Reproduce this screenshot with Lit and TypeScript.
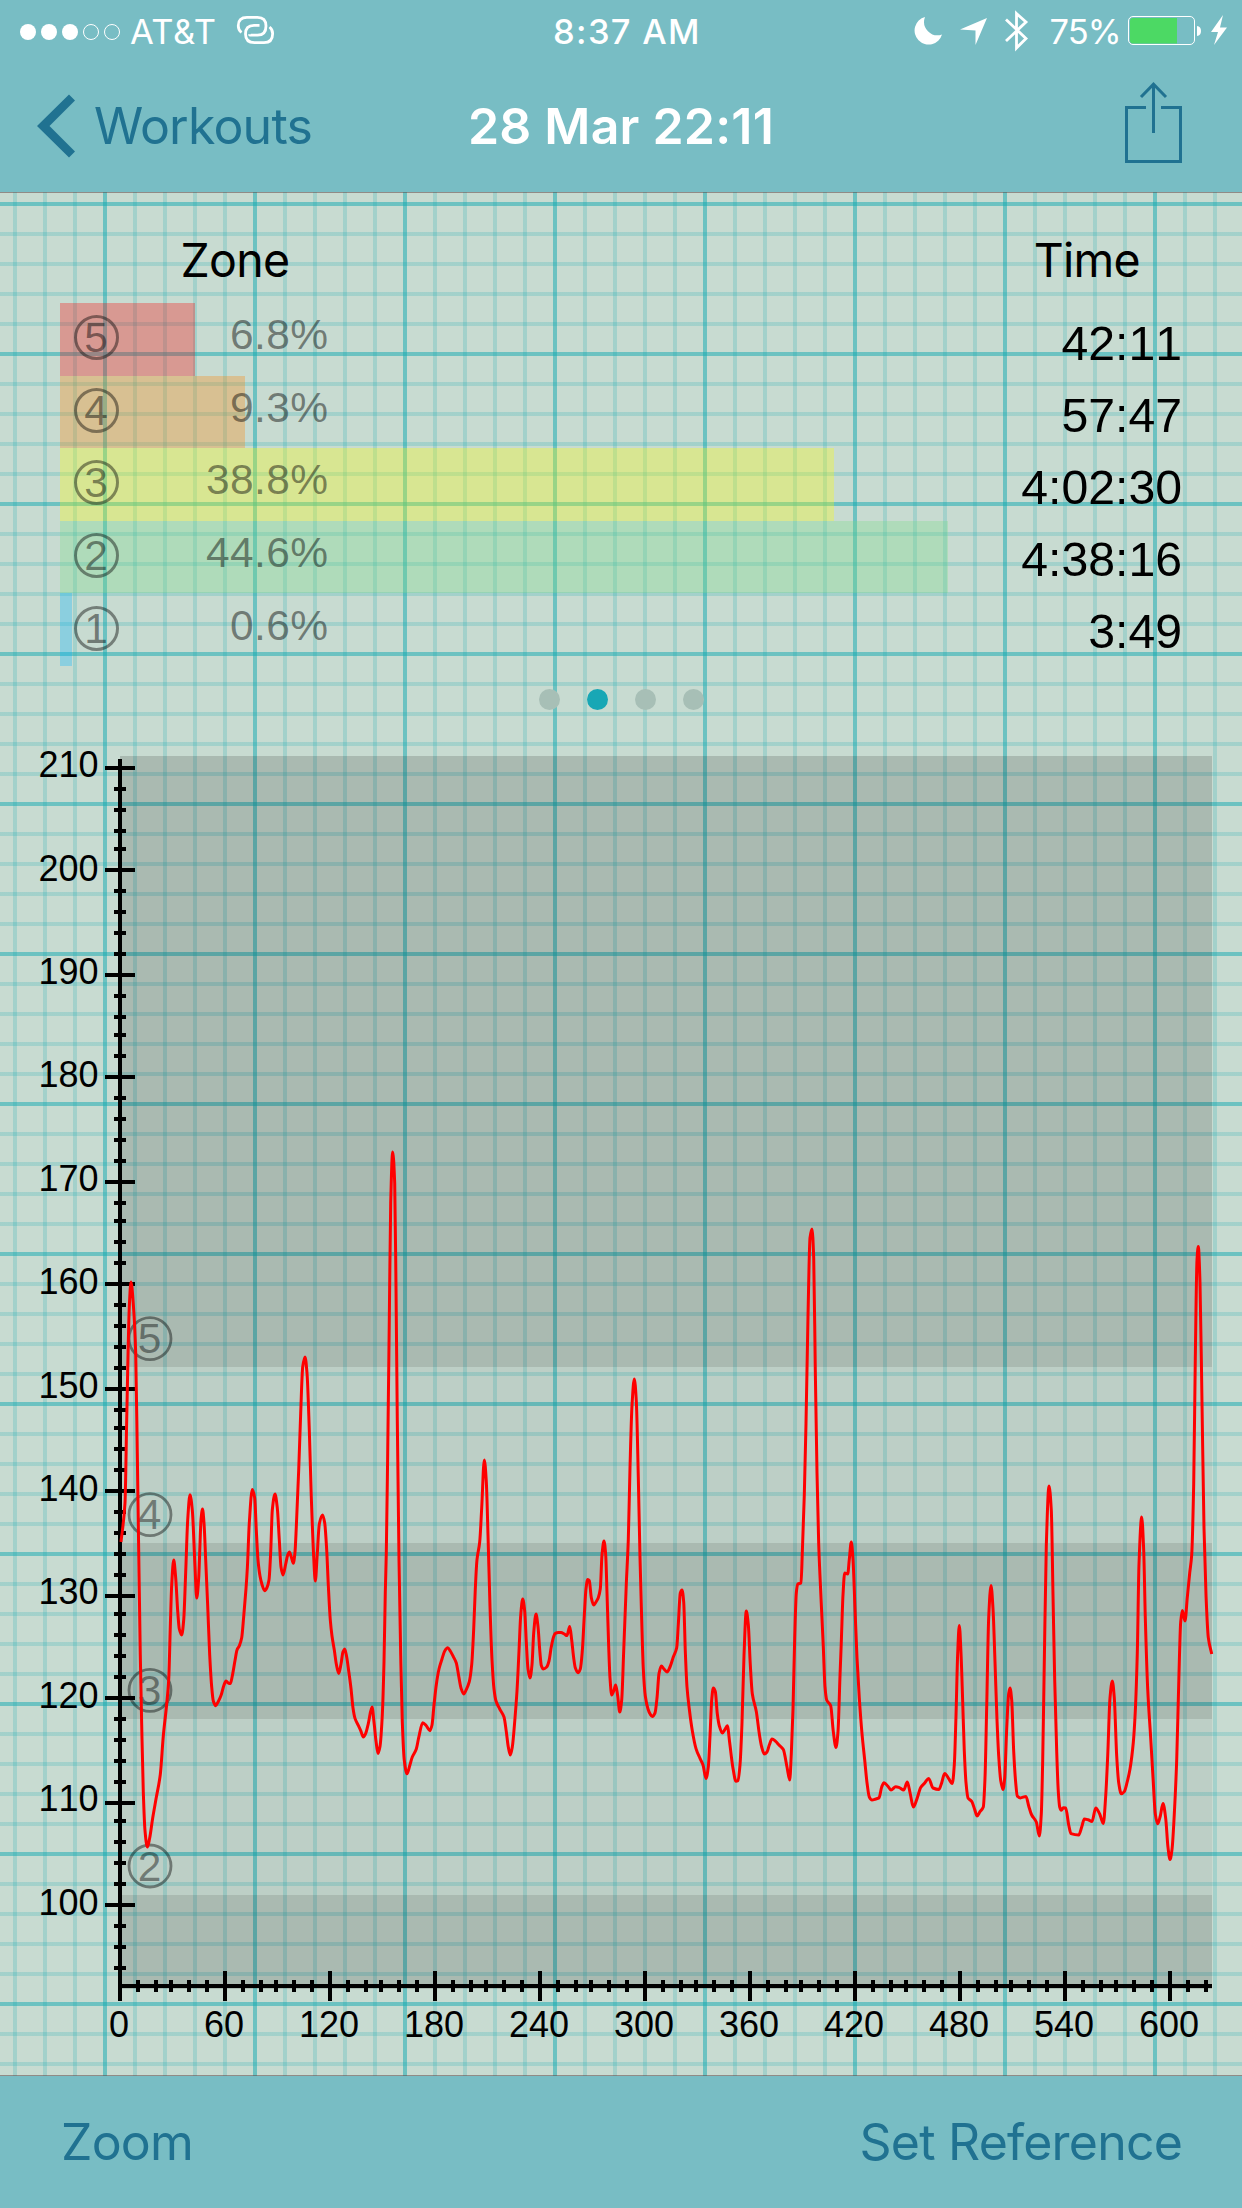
import { LitElement, html, svg, css } from "lit";
import { customElement } from "lit/decorators.js";

interface Zone {
  id: number;
  percent: string;
  bar: number;
  time: string;
}

const ZONES: Zone[] = [
  { id: 5, percent: "6.8%", bar: 134.7, time: "42:11" },
  { id: 4, percent: "9.3%", bar: 184.5, time: "57:47" },
  { id: 3, percent: "38.8%", bar: 773.7, time: "4:02:30" },
  { id: 2, percent: "44.6%", bar: 888, time: "4:38:16" },
  { id: 1, percent: "0.6%", bar: 12, time: "3:49" },
];

// Heart-rate trace as x,y pairs in chart space.
const TRACE = `121,1542 125,1503 126.7,1420 129.3,1307 131,1282 133.5,1307 135.7,1353 137.3,1453 138.7,1551
140.3,1655 141.7,1725 143.3,1792 145,1830.6 147.3,1847 149.5,1839 152.7,1818 156,1799 160.3,1774.5 163.3,1736
166.7,1704 168.7,1680 170.3,1627 171.7,1585 173.7,1560 175.7,1578 177.7,1611 179.3,1629 181.7,1635 183.7,1620
185.7,1572 187.7,1520 190,1494.7 192.3,1510 195,1567 196.7,1598 198.7,1578 199.9,1547 201,1520 202.5,1509
204,1523 205.7,1560 207.7,1606 209.7,1655 211.7,1687 213.3,1701 215.7,1705.7 218.3,1701.5 221,1695.6 224,1685
226,1681 228.3,1683 230.3,1683.6 232.3,1676 235,1660.5 237,1650 239.3,1645.8 241.7,1637.7 243.7,1616.6
246,1588.6 247.4,1567 249.3,1523 252.3,1489.5 254.7,1498 256.3,1530 258,1560 260,1576 262,1584.4 264.7,1590.7
267,1587.5 269,1580 270.7,1552 272.3,1510 275,1494 277.3,1508 279.3,1540 281,1567 283,1575 285.7,1564
287.7,1555 289.3,1552 291.3,1557 293.3,1563.3 295,1552 296.3,1527 298.7,1470 300.7,1413 302.7,1367 305,1357
307,1373 309.3,1430 311.3,1497 313.7,1557 315.3,1581 317.2,1555 319.3,1524 322.5,1515 324.7,1523 326.7,1550
328.3,1585 330.3,1620 332,1636 334.3,1650 336.3,1664 338.7,1673.5 341,1664 343,1651.7 344.7,1649 346.7,1657
348.7,1671 351,1688.5 353,1708 355,1718.4 358.3,1725.4 360.7,1730.6 363.3,1737 365.7,1733.4 368.3,1723.6
372,1707 374,1722 376,1741 378,1753.4 380,1746.4 382.3,1715 384,1662 385.3,1592 386.3,1553 387.7,1453
389.3,1320 390.7,1203 392.7,1152 394.7,1183 396,1287 397.3,1420 399,1560 400.7,1655 402.3,1722 404.3,1760.5
407,1773.8 409.7,1765.7 412.3,1757 416.3,1749 418.7,1737.7 422.7,1722.7 426.3,1725.8 430,1730.7 432,1725
434,1705 436.3,1684.7 439,1669 442,1659 444.7,1651 447.7,1647.7 450.3,1651 453.3,1656.6 456.3,1663
458.7,1676 461,1688 463.7,1694 466.3,1689.6 469.3,1681.6 471.7,1664.6 473.7,1629 475.3,1589 477,1559.7
479.7,1542 481.7,1508 484.3,1460 486.3,1481.6 488,1535 490,1606.6 492,1660 494,1689 496,1701 499.7,1709
504,1717 506.3,1731.6 508.3,1747 510.3,1755 512.3,1747 515,1718 517,1691 519,1651 520.7,1615.5 522.7,1599
524.7,1611 526.3,1642 528,1669 530,1678 532,1664.6 533.7,1633 536,1614 538,1626.7 540,1653.5 541.3,1665.5
543.3,1669 546.7,1667 549,1661 551.3,1646.8 553.7,1636.5 555.3,1633.4 558.3,1632.5 561,1632.5 564.3,1634
567,1635.6 569.7,1626.5 571.7,1640 573.7,1658 575.3,1667.8 578,1672.7 580.3,1669 582.3,1651 584.3,1615.5
586,1588.8 587.7,1579.5 589.3,1580.7 591.3,1597.7 593.7,1605 596,1602 598.3,1597.7 600.3,1588.8 602,1555
604,1541 605.7,1555 607,1593 608.7,1646.8 610,1678 611.7,1695 613.7,1691 615.7,1685 617.7,1696 619.7,1712
621.7,1700 623.7,1651 626.3,1584 628.3,1539.6 630,1468 632,1405.7 634.3,1379 636.3,1401 638.3,1477
640,1557.5 641.7,1620 643.3,1669 645.3,1696 648,1709 650,1713.8 652.3,1716.4 655,1713 657,1698 659,1673.6
661.3,1666 664,1669 667,1672 670,1667 673.3,1657 676.7,1647.7 678.3,1624.5 680.3,1593 682,1590 683.7,1602
685.3,1651 687,1687 689.3,1709 692.3,1730.7 696,1748.6 700,1758.4 703,1765 706,1778.5 708.3,1767 710,1736
711.7,1700 713.3,1688 715.3,1691.4 717.3,1713.8 719.3,1725.8 722.3,1733 725,1729.4 727.3,1725.8
729.7,1742.8 732.7,1766.4 736,1781.2 738,1780.7 740,1765 742,1722.7 744,1655.7 746.3,1611 748.3,1624.5
750.3,1664.6 752.3,1693.7 756.3,1711.5 759.3,1733.8 761.7,1747 764.3,1754 767,1752 769.3,1745 772,1739
775.7,1741.4 779,1745 783.3,1749.5 787,1767 789.7,1780 791.3,1754 793,1709 794.7,1638 796.3,1593
797.7,1584 801,1583 802.3,1553 804.3,1495 806,1423.6 808,1316.4 810,1238 812,1229 813.7,1258 815.3,1370
817,1472.7 818.7,1544 821,1597.7 823.3,1646.8 825,1687 826.7,1700 830.7,1705.7 833.3,1731.6 836,1747.5
838,1731.6 840,1676 841.3,1642 843,1595 844.7,1573 847.7,1574 849.3,1559.5 851.3,1542 853,1559.5
855,1608.6 857,1657.7 859.3,1698 862,1733.6 864.7,1760 867,1782.7 869.3,1797 872,1800 875.7,1799
879,1797.9 881.7,1787 884,1782.7 887.7,1786 891,1790 895.7,1786.7 899.3,1787.6 903.7,1790 907.3,1782
910.3,1794 913.3,1807 916.7,1799.6 920.7,1787.6 924.7,1783 928.7,1778.5 933,1788 939,1789.4 941.7,1782.7
944.7,1773.5 948.7,1778.7 952.3,1783.5 954.3,1764.8 956,1715.7 957.7,1653 959.3,1625.5 961,1653
962.7,1702 964.3,1751 966,1782.7 968,1797.9 971.7,1801.4 974.7,1809.5 977,1816 980,1811.7 983.3,1807
985,1778 986.7,1706.8 988.7,1617.5 991,1585.5 993,1608.6 995,1662 997,1720 998.7,1756 1000.7,1780.4
1003,1789.5 1004.7,1778 1006.7,1729 1008.7,1693.4 1010,1688 1011.7,1700 1013.7,1751.4 1015.7,1782.7
1017.3,1796 1020.3,1797.9 1026,1796.5 1028.7,1806 1031.7,1815 1036.3,1822 1039.3,1836 1041.3,1814
1042.7,1760 1044.3,1662 1046.3,1546 1049,1486 1051.3,1510 1053,1595 1054.7,1680 1056.7,1751.4
1058.3,1791.6 1059.7,1807 1061.3,1810.3 1063.3,1807.7 1065.7,1808 1068.7,1825 1071,1833.6 1078.7,1835
1081.7,1827 1084.3,1819 1088,1819.7 1092,1821.5 1095.7,1808 1099.7,1814 1103.3,1823.5 1105.7,1796
1107.7,1756 1110,1698 1112.3,1681 1114.3,1698 1116.7,1756 1118.7,1782.7 1121.3,1793.8 1124.3,1791.6
1127,1782.7 1130,1769 1133.3,1742.5 1135.3,1711 1137.3,1653 1139,1564 1141.7,1517 1143.7,1550.5
1145.3,1617.5 1147.7,1689 1150.7,1738 1153.3,1782.7 1155.3,1814 1157.7,1823.8 1160.3,1816 1163,1803.5
1165.7,1818.4 1168,1847.4 1170,1859.5 1172,1849.6 1174.3,1814 1176.7,1760 1178.7,1684.5 1180.7,1622
1182.3,1610.5 1185,1621 1187.3,1597.4 1189.7,1573 1191.7,1555 1193.7,1483.6 1195.3,1358.6 1197,1260
1198.3,1246.5 1200,1282.7 1202,1403 1204,1528 1206,1595 1208.3,1637.6 1211.7,1654`
  .split(/\s+/)
  .map((pair) => pair.split(",").map(Number));

// Cubic interpolation whose tangents never overshoot the samples.
function smoothPath(points: number[][]): string {
  const n = points.length;
  const slope: number[] = [];
  for (let i = 0; i < n - 1; i++) {
    slope.push((points[i + 1][1] - points[i][1]) / (points[i + 1][0] - points[i][0]));
  }
  const tangent = points.map((_, i) => {
    if (i === 0) return slope[0];
    if (i === n - 1) return slope[n - 2];
    const a = slope[i - 1];
    const b = slope[i];
    return a * b <= 0 ? 0 : (2 * a * b) / (a + b);
  });
  let d = `M${points[0][0]},${points[0][1]}`;
  for (let i = 0; i < n - 1; i++) {
    const [x0, y0] = points[i];
    const [x1, y1] = points[i + 1];
    const h = (x1 - x0) / 3;
    d += `C${(x0 + h).toFixed(2)},${(y0 + tangent[i] * h).toFixed(2)} ${(x1 - h).toFixed(2)},${(y1 - tangent[i + 1] * h).toFixed(2)} ${x1},${y1}`;
  }
  return d;
}

// Ticks snap to whole points on a 3x display.
const snap = (v: number) => Math.round(v / 3) * 3;
const bpmY = (bpm: number) => 767.5 + (210 - bpm) * 10.34;
const minuteX = (minute: number) => 120 + minute * 1.7497;
const range = (from: number, to: number, step: number) => {
  const out: number[] = [];
  for (let v = from; v <= to; v += step) out.push(v);
  return out;
};

@customElement("status-bar")
export class StatusBar extends LitElement {
  static styles = css`
    :host {
      display: grid;
      grid-template-columns: 1fr auto 1fr;
      align-items: center;
      height: 63px;
      padding: 0 13px 0 20px;
      color: #fff;
      font-size: 34.5px;
      line-height: 63px;
      white-space: nowrap;
    }
    .left,
    .right {
      display: flex;
      align-items: center;
    }
    .right {
      justify-content: flex-end;
    }
    svg {
      display: block;
      flex: none;
    }
    .carrier {
      width: 107px;
      padding-left: 10px;
      letter-spacing: 0.5px;
      box-sizing: border-box;
    }
    .clock {
      font-weight: 500;
      letter-spacing: 1.3px;
      padding-left: 5px;
    }
    .charge {
      width: 79px;
      padding-left: 19.5px;
      box-sizing: border-box;
      letter-spacing: -1px;
    }
  `;

  render() {
    return html`
      <div class="left">
        <svg width="100" height="60" viewBox="20 0 100 60" fill="#fff">
          <circle cx="28" cy="30" r="8" />
          <circle cx="49" cy="30" r="8" />
          <circle cx="70" cy="30" r="8" />
          <circle cx="91" cy="30" r="7.5" fill="none" stroke="#fff" />
          <circle cx="112" cy="30" r="7.5" fill="none" stroke="#fff" />
        </svg>
        <span class="carrier">AT&amp;T</span>
        <svg width="50" height="63" viewBox="227 0 50 63" fill="none" stroke="#fff" stroke-width="2.8">
          <path d="M241.5 32.5A8.3 8.3 0 0 1 238.3 25.5Q238.3 17.3 247 17.3H257.5Q266 17.3 266 26Q266 35.2 257.5 35.2H251Q249.5 35.2 249.5 34.2" />
          <path d="M269.5 27A8.3 8.3 0 0 1 272.6 34Q272.6 42.6 264 42.6H254.5Q245.5 42.6 245.5 34Q245.5 25.4 254 25.4H259.5" />
        </svg>
      </div>
      <span class="clock">8:37 AM</span>
      <div class="right">
        <svg width="120" height="63" viewBox="910 0 120 63" fill="#fff">
          <path d="M925 17A14 14 0 1 0 942 34.5A13.5 13.5 0 0 1 925 17Z" />
          <path d="M960 29.5 987 18 975.5 45V30.5Z" />
          <path d="M1006 19.5 1026 38.5 1016.5 48V13.5L1026 22 1006 41" fill="none" stroke="#fff" stroke-width="2.8" />
        </svg>
        <span class="charge">75%</span>
        <svg width="120" height="63" viewBox="1109 0 120 63">
          <rect x="1128.5" y="16.5" width="66" height="28" rx="4.5" fill="none" stroke="#fff" />
          <path d="M1177 18H1133Q1130 18 1130 21V40.5Q1130 43.5 1133 43.5H1177Z" fill="#4cd964" />
          <path d="M1197 26Q1201 26.5 1201 31T1197 36Z" fill="#fff" />
          <path d="M1223 15 1211 32H1218L1214 45 1227 27.500H1220Z" fill="#fff" />
        </svg>
      </div>
    `;
  }
}

@customElement("nav-bar")
export class NavBar extends LitElement {
  static styles = css`
    :host {
      display: grid;
      grid-template-columns: 1fr auto 1fr;
      align-items: center;
      height: 126px;
      padding: 0 60px 3px 60px;
      font-size: 50px;
      line-height: 126px;
      color: #207291;
      white-space: nowrap;
    }
    .back {
      display: flex;
      align-items: center;
      gap: 19px;
      margin-left: -23px;
      letter-spacing: -0.8px;
    }
    h1 {
      margin: 0;
      font-size: 50px;
      font-weight: 600;
      color: #fff;
      letter-spacing: 0.2px;
    }
    svg {
      display: block;
    }
    .share {
      justify-self: end;
    }
  `;

  render() {
    return html`
      <span class="back">
        <svg width="38" height="64" viewBox="37 94.5 38 64" fill="#207291">
          <path d="M69 95 75 101 49.5 126.5 75 152 69 158 37 126.5Z" />
        </svg>
        <span>Workouts</span>
      </span>
      <h1>28 Mar 22:11</h1>
      <svg class="share" width="57" height="88" viewBox="1125 82 57 88" fill="none" stroke="#207291" stroke-width="3">
        <path d="M1146 107.5H1126.5V161.5H1180.5V107.5H1161" />
        <path d="M1153.5 133V84M1141 97 1153.5 84.2 1166 97" />
      </svg>
    `;
  }
}

@customElement("zone-summary")
export class ZoneSummary extends LitElement {
  static styles = css`
    :host {
      display: block;
      height: 474px;
      padding: 27px 60px 0 60px;
      box-sizing: border-box;
    }
    .heads {
      display: flex;
      justify-content: space-between;
      padding: 0 42px 0 120.5px;
      height: 84px;
      line-height: 83px;
      font-size: 46.5px;
      letter-spacing: -0.7px;
      color: #000;
    }
    .columns {
      display: flex;
      justify-content: space-between;
      font-family: "Liberation Sans", Arial, sans-serif;
      font-kerning: none;
    }
    .row {
      position: relative;
      display: flex;
      align-items: center;
      height: 72.6px;
      width: 268.5px;
      color: rgba(0, 0, 0, 0.45);
    }
    .bar {
      position: absolute;
      left: 0;
      top: 0;
      height: 100%;
      opacity: 0.3;
    }
    .z5 { background: #f00; }
    .z4 { background: #ff8000; }
    .z3 { background: #ff0; }
    .z2 { background: #78db84; }
    .z1 { background: #00b4ff; }
    .badge {
      position: relative;
      display: flex;
      align-items: center;
      justify-content: center;
      box-sizing: border-box;
      width: 45px;
      height: 45px;
      margin: 0 0 3px 13.5px;
      border: 3px solid rgba(0, 0, 0, 0.42);
      border-radius: 50%;
      font-size: 42.5px;
      line-height: 39px;
    }
    .percent {
      position: relative;
      flex: 1;
      text-align: right;
      font-size: 42.5px;
      letter-spacing: 0.4px;
      margin-bottom: 8px;
    }
    .times {
      padding-top: 4px;
      font-size: 48.2px;
      line-height: 72px;
      text-align: right;
      color: #000;
    }
  `;

  render() {
    return html`
      <div class="heads"><span>Zone</span><span>Time</span></div>
      <div class="columns">
        <div>
          ${ZONES.map(
            (z) => html`<div class="row">
              <div class="bar z${z.id}" style="width:${z.bar}px"></div>
              <span class="badge">${z.id}</span>
              <span class="percent">${z.percent}</span>
            </div>`
          )}
        </div>
        <div class="times">${ZONES.map((z) => html`<div>${z.time}</div>`)}</div>
      </div>
    `;
  }
}

@customElement("page-dots")
export class PageDots extends LitElement {
  static styles = css`
    :host {
      display: flex;
      justify-content: center;
      align-items: center;
      gap: 27px;
      height: 66px;
    }
    i {
      width: 21px;
      height: 21px;
      border-radius: 50%;
      background: #a7bfb6;
    }
    .on {
      background: #18a7b5;
    }
  `;

  render() {
    return html`<i></i><i class="on"></i><i></i><i></i>`;
  }
}

@customElement("heart-chart")
export class HeartChart extends LitElement {
  static styles = css`
    :host {
      display: block;
      height: 1344px;
    }
    svg {
      display: block;
      font-kerning: none;
    }
    .label {
      font: 36px "Liberation Sans", Arial, sans-serif;
      font-kerning: none;
      fill: #000;
    }
    .y {
      text-anchor: end;
    }
    .x {
      text-anchor: middle;
    }
    .dark {
      fill: rgba(0, 0, 0, 0.15);
    }
    .light {
      fill: rgba(0, 0, 0, 0.05);
    }
    .zone {
      font: 42.5px "Liberation Sans", Arial, sans-serif;
      text-anchor: middle;
      fill: #000;
      fill-opacity: 0.42;
    }
    .ring {
      fill: none;
      stroke: #000;
      stroke-opacity: 0.42;
      stroke-width: 2.8;
    }
    .trace {
      fill: none;
      stroke: #f00;
      stroke-width: 3;
      stroke-linejoin: round;
    }
  `;

  render() {
    const bands: [number, number, string][] = [
      [756, 1367, "dark"],
      [1367, 1543, "light"],
      [1543, 1719, "dark"],
      [1719, 1895, "light"],
      [1895, 1989, "dark"],
    ];
    const marks: [number, number][] = [
      [5, 1338.7],
      [4, 1514.7],
      [3, 1690.3],
      [2, 1866],
    ];
    return html`<svg width="1242" height="1344" viewBox="0 732 1242 1344">
      ${bands.map(([a, b, c]) => svg`<rect class=${c} x="120" y=${a} width="1092" height=${b - a} />`)}
      ${marks.map(
        ([n, y]) => svg`<circle class="ring" cx="150" cy=${y} r="21" /><text class="zone" x="149.5" y=${y + 14.5}>${n}</text>`
      )}
      <rect x="118" y="759" width="4" height="1242" />
      <rect x="118" y="1984" width="1094" height="4" />
      ${range(94, 210, 2).map((v) => {
        const y = snap(bpmY(v)) - 2;
        return v % 10 === 0
          ? svg`<rect x="105" y=${y} width="30" height="4" /><text class="label y" x="98.5" y=${bpmY(v) + 9.7}>${v}</text>`
          : svg`<rect x="114" y=${y} width="12" height="4" />`;
      })}
      ${range(0, 620, 10).map((v) => {
        const x = snap(minuteX(v)) - 2;
        return v % 60 === 0
          ? svg`<rect x=${x} y="1971" width="4" height="30" /><text class="label x" x=${x + 1} y="2036.5">${v}</text>`
          : svg`<rect x=${x} y="1980" width="4" height="12" />`;
      })}
      <path class="trace" d=${smoothPath(TRACE)} />
    </svg>`;
  }
}

@customElement("app-root")
export class AppRoot extends LitElement {
  static styles = css`
    :host {
      display: flex;
      flex-direction: column;
      width: 1242px;
      height: 2208px;
      overflow: hidden;
      font-family: Inter, "Liberation Sans", sans-serif;
    }
    header {
      position: relative;
      flex: none;
      height: 192px;
      background: #78bdc4;
      box-shadow: 0 1px rgba(90, 60, 60, 0.5);
    }
    main {
      flex: none;
      height: 1884px;
      background-color: #c8dbd1;
      background-image: linear-gradient(
          90deg,
          rgba(16, 169, 177, 0.5) 4px,
          transparent 4px 30px,
          rgba(16, 169, 177, 0.2) 30px 34px,
          transparent 34px 60px,
          rgba(16, 169, 177, 0.2) 60px 64px,
          transparent 64px 90px,
          rgba(16, 169, 177, 0.2) 90px 94px,
          transparent 94px 120px,
          rgba(16, 169, 177, 0.2) 120px 124px,
          transparent 124px
        ),
        linear-gradient(
          180deg,
          rgba(16, 169, 177, 0.5) 4px,
          transparent 4px 30px,
          rgba(16, 169, 177, 0.2) 30px 34px,
          transparent 34px 60px,
          rgba(16, 169, 177, 0.2) 60px 64px,
          transparent 64px 90px,
          rgba(16, 169, 177, 0.2) 90px 94px,
          transparent 94px 120px,
          rgba(16, 169, 177, 0.2) 120px 124px,
          transparent 124px
        );
      background-size: 150px 100%, 100% 150px;
      background-position: 103px 0, 0 10px;
    }
    footer {
      position: relative;
      flex: none;
      display: flex;
      justify-content: space-between;
      height: 132px;
      box-sizing: border-box;
      padding: 0 60px 0 61px;
      line-height: 132px;
      font-size: 50px;
      letter-spacing: -0.8px;
      color: #207291;
      background: #78bdc4;
      box-shadow: 0 -1px rgba(90, 60, 60, 0.5);
    }
  `;

  render() {
    return html`
      <header><status-bar></status-bar><nav-bar></nav-bar></header>
      <main>
        <zone-summary></zone-summary>
        <page-dots></page-dots>
        <heart-chart></heart-chart>
      </main>
      <footer><span>Zoom</span><span>Set Reference</span></footer>
    `;
  }
}
